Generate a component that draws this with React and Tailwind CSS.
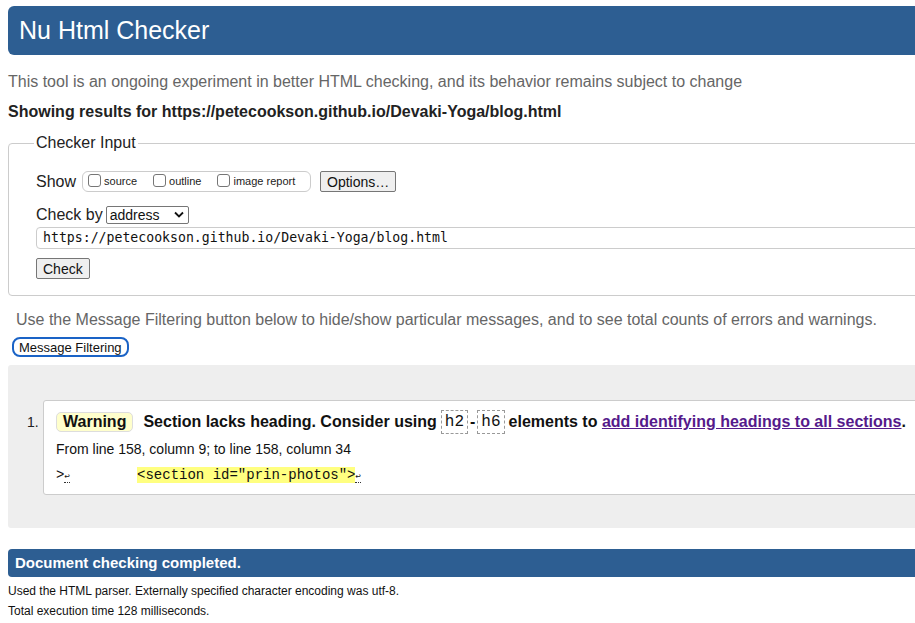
import React from "react";

const sans = "font-['Liberation_Sans',Arial,sans-serif]";
const menlo = "font-['DejaVu_Sans_Mono',monospace]";
const courier = "font-['Liberation_Mono','Courier_New',monospace]";

const Box = ({ label }) => (
  <span className="inline-flex items-center">
    <span className="inline-block w-[13px] h-[13px] rounded-[3px] border border-[#767676] bg-white mr-[3px] translate-y-[-1px]" />
    <span className="text-[11px] text-[#222]">{label}</span>
  </span>
);

const Ret = () => (
  <span className="inline-block text-[9px] leading-none border-b border-dotted border-[#333] align-baseline">↩</span>
);

export default function App() {
  return (
    <div className={`w-full overflow-hidden bg-white text-[#111] ${sans}`}>
      <div className="w-[1000px] pl-2">
        <header className="mt-[6px] h-[49px] bg-[#2d5e92] rounded-l-[6px] flex items-center pl-[11px]">
          <h1 className="text-white text-[25px] leading-none">Nu Html Checker</h1>
        </header>

        <p className="mt-[18px] text-[16px] leading-[18px] text-[#666]">
          This tool is an ongoing experiment in better HTML checking, and its behavior remains subject to change
        </p>
        <p className="mt-[12px] text-[16px] leading-[18px] font-bold text-[#222]">
          Showing results for https://petecookson.github.io/Devaki-Yoga/blog.html
        </p>

        <fieldset className="mt-[13px] border border-[#ccc] rounded-[4px] pl-[27px] pt-[19px] pb-[16px]">
          <legend className="ml-[-2px] px-[2px] text-[16px] leading-[18px] text-[#222]">Checker Input</legend>

          <div className="flex items-center h-[21px]">
            <span className="text-[16px] text-[#222] mr-[6px]">Show</span>
            <div className="flex items-center h-[21px] w-[229px] border border-[#ccc] rounded-[6px] pl-[5px] gap-[16px]">
              <Box label="source" />
              <Box label="outline" />
              <Box label="image report" />
            </div>
            <button className="ml-[9px] h-[21px] px-[6px] border border-[#767676] rounded-[2px] bg-[#efefef] text-[14px] text-[#111] leading-none">
              Options…
            </button>
          </div>

          <div className="mt-[14px] flex items-center h-[17px]">
            <span className="text-[16px] text-[#222] mr-[3px]">Check by</span>
            <div className="h-[18px] w-[83px] border border-[#767676] rounded-[2px] bg-white flex items-center justify-between pl-[3px] pr-[4px]">
              <span className="text-[14px] leading-none text-[#111]">address</span>
              <svg width="10" height="7" viewBox="0 0 10 7">
                <path d="M1 1.5 L5 5.5 L9 1.5" fill="none" stroke="#111" strokeWidth="1.8" />
              </svg>
            </div>
          </div>

          <div className="mt-[4px] h-[22px] border border-[#ccc] rounded-l-[4px] flex items-center pl-[6px]">
            <span className={`${menlo} text-[13.2px] text-[#111]`}>https://petecookson.github.io/Devaki-Yoga/blog.html</span>
          </div>

          <button className="mt-[9px] block h-[21px] px-[6px] border border-[#767676] rounded-[2px] bg-[#efefef] text-[14px] text-[#111] leading-none">
            Check
          </button>
        </fieldset>

        <p className="mt-[15px] pl-[8px] text-[16px] leading-[18px] text-[#666]">
          Use the Message Filtering button below to hide/show particular messages, and to see total counts of errors and warnings.
        </p>
        <button className="mt-[8px] ml-[4px] block h-[20px] px-[5px] border-2 border-[#1a63c6] rounded-[8px] bg-white text-[13px] leading-none text-[#111]">
          Message Filtering
        </button>

        <section className="mt-[8px] bg-[#eeeeee] rounded-l-[3px] pt-[35px] pb-[33px] pl-[19px]">
          <div className="flex">
            <span className="w-[16px] pt-[12px] text-[14px] text-[#222]">1.</span>
            <div className="flex-1 bg-white border border-[#ccc] rounded-l-[3px] pl-[12px] pt-[10px] pb-[11px]">
              <p className="flex items-center text-[16px] font-bold text-[#111] h-[22px]">
                <span className="h-[20px] px-[6px] flex items-center bg-[#ffffcc] border border-[#ddd] rounded-[5px] mr-[10px]">Warning</span>
                Section lacks heading. Consider using
                <code className={`${courier} font-normal ml-[4px] px-[3px] h-[24px] flex items-center border border-dashed border-[#999]`}>h2</code>
                <span className="mx-[2px]">-</span>
                <code className={`${courier} font-normal px-[3px] h-[24px] flex items-center border border-dashed border-[#999] mr-[4px]`}>h6</code>
                elements to&nbsp;
                <a className="text-[#551a8b] underline" href="#">add identifying headings to all sections</a>.
              </p>
              <p className="mt-[8px] text-[14px] leading-[16px] text-[#111]">From line 158, column 9; to line 158, column 34</p>
              <p className={`mt-[10px] ${courier} text-[14px] leading-[16px] text-[#111] whitespace-pre`}>
                {">"}<Ret />{"        "}<span className="bg-[#ffff80]">{'<section id="prin-photos">'}</span><Ret />
              </p>
            </div>
          </div>
        </section>

        <div className="mt-[21px] h-[28px] bg-[#2d5e92] rounded-l-[4px] flex items-center pl-[7px]">
          <span className="text-white text-[15px] font-bold">Document checking completed.</span>
        </div>
        <p className="mt-[7px] text-[12px] leading-[14px] text-[#111]">Used the HTML parser. Externally specified character encoding was utf-8.</p>
        <p className="mt-[6px] text-[12px] leading-[14px] text-[#111]">Total execution time 128 milliseconds.</p>
        <div className="h-[10px]" />
      </div>
    </div>
  );
}
